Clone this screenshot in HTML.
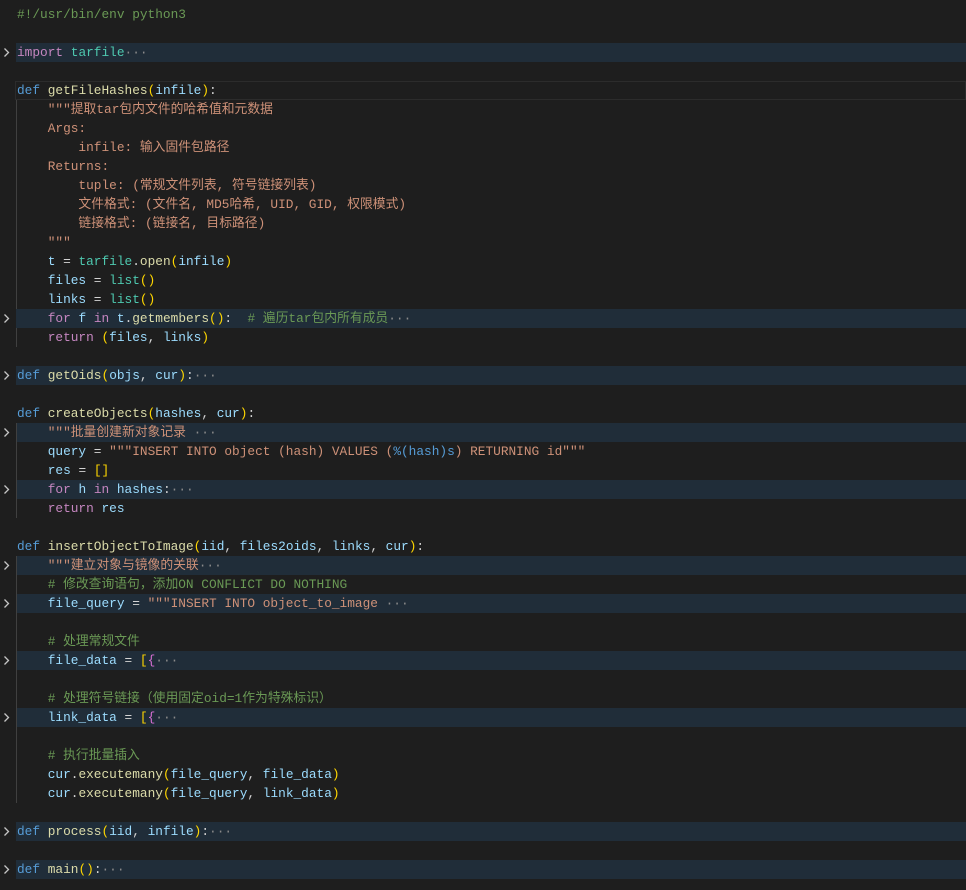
<!DOCTYPE html>
<html><head><meta charset="utf-8"><style>
html,body{margin:0;padding:0;background:#1e1e1e;width:966px;height:890px;overflow:hidden}
#ed{position:relative;width:966px;height:890px;font-family:"Liberation Mono","Noto Sans CJK SC",monospace;font-size:12.8px;color:#d4d4d4}
.l{position:absolute;left:0;width:966px;height:19px;line-height:19px;white-space:pre}
.t{position:absolute;left:17px;top:0}
.f{position:absolute;left:16px;right:0;top:0;height:19px;background:#202d39}
.cur{position:absolute;left:15px;right:0;top:0;height:17px;border:1px solid #2c2c2c}
.ch{position:absolute;left:2px;top:5px;width:9px;height:9px}
.g{position:absolute;left:16px;width:1px;background:#404040}
.k{color:#569cd6}.fn{color:#dcdcaa}.p{color:#9cdcfe}.s{color:#ce9178}.c{color:#6a9955}.kw{color:#c586c0}.m{color:#4ec9b0}
.y{color:#ffd700}.pk{color:#da70d6}.e{color:#8b8b8b}
</style></head><body><div id="ed">
<div class="g" style="top:100px;height:247px"></div>
<div class="g" style="top:423px;height:95px"></div>
<div class="g" style="top:556px;height:247px"></div>
<div class="l" style="top:5px"><span class="t c">#!/usr/bin/env python3</span></div>
<div class="l" style="top:43px"><div class="f"></div><svg class="ch" viewBox="0 0 9 9"><path d="M2.5 0.5 L6.5 4.5 L2.5 8.5" fill="none" stroke="#c5c5c5" stroke-width="1.3"/></svg><span class="t"><span class="kw">import</span> <span class="m">tarfile</span><span class="e">···</span></span></div>
<div class="l" style="top:81px"><div class="cur"></div><span class="t"><span class="k">def</span> <span class="fn">getFileHashes</span><span class="y">(</span><span class="p">infile</span><span class="y">)</span>:</span></div>
<div class="l" style="top:100px"><span class="t s">    """提取tar包内文件的哈希值和元数据</span></div>
<div class="l" style="top:119px"><span class="t s">    Args:</span></div>
<div class="l" style="top:138px"><span class="t s">        infile: 输入固件包路径</span></div>
<div class="l" style="top:157px"><span class="t s">    Returns:</span></div>
<div class="l" style="top:176px"><span class="t s">        tuple: (常规文件列表, 符号链接列表)</span></div>
<div class="l" style="top:195px"><span class="t s">        文件格式: (文件名, MD5哈希, UID, GID, 权限模式)</span></div>
<div class="l" style="top:214px"><span class="t s">        链接格式: (链接名, 目标路径)</span></div>
<div class="l" style="top:233px"><span class="t s">    """</span></div>
<div class="l" style="top:252px"><span class="t">    <span class="p">t</span> = <span class="m">tarfile</span>.<span class="fn">open</span><span class="y">(</span><span class="p">infile</span><span class="y">)</span></span></div>
<div class="l" style="top:271px"><span class="t">    <span class="p">files</span> = <span class="m">list</span><span class="y">()</span></span></div>
<div class="l" style="top:290px"><span class="t">    <span class="p">links</span> = <span class="m">list</span><span class="y">()</span></span></div>
<div class="l" style="top:309px"><div class="f"></div><svg class="ch" viewBox="0 0 9 9"><path d="M2.5 0.5 L6.5 4.5 L2.5 8.5" fill="none" stroke="#c5c5c5" stroke-width="1.3"/></svg><span class="t">    <span class="kw">for</span> <span class="p">f</span> <span class="kw">in</span> <span class="p">t</span>.<span class="fn">getmembers</span><span class="y">()</span>:  <span class="c"># 遍历tar包内所有成员</span><span class="e">···</span></span></div>
<div class="l" style="top:328px"><span class="t">    <span class="kw">return</span> <span class="y">(</span><span class="p">files</span>, <span class="p">links</span><span class="y">)</span></span></div>
<div class="l" style="top:366px"><div class="f"></div><svg class="ch" viewBox="0 0 9 9"><path d="M2.5 0.5 L6.5 4.5 L2.5 8.5" fill="none" stroke="#c5c5c5" stroke-width="1.3"/></svg><span class="t"><span class="k">def</span> <span class="fn">getOids</span><span class="y">(</span><span class="p">objs</span>, <span class="p">cur</span><span class="y">)</span>:<span class="e">···</span></span></div>
<div class="l" style="top:404px"><span class="t"><span class="k">def</span> <span class="fn">createObjects</span><span class="y">(</span><span class="p">hashes</span>, <span class="p">cur</span><span class="y">)</span>:</span></div>
<div class="l" style="top:423px"><div class="f" style="left:17px"></div><svg class="ch" viewBox="0 0 9 9"><path d="M2.5 0.5 L6.5 4.5 L2.5 8.5" fill="none" stroke="#c5c5c5" stroke-width="1.3"/></svg><span class="t">    <span class="s">"""批量创建新对象记录</span> <span class="e">···</span></span></div>
<div class="l" style="top:442px"><span class="t">    <span class="p">query</span> = <span class="s">"""INSERT INTO object (hash) VALUES (</span><span class="k">%(hash)s</span><span class="s">) RETURNING id"""</span></span></div>
<div class="l" style="top:461px"><span class="t">    <span class="p">res</span> = <span class="y">[]</span></span></div>
<div class="l" style="top:480px"><div class="f" style="left:17px"></div><svg class="ch" viewBox="0 0 9 9"><path d="M2.5 0.5 L6.5 4.5 L2.5 8.5" fill="none" stroke="#c5c5c5" stroke-width="1.3"/></svg><span class="t">    <span class="kw">for</span> <span class="p">h</span> <span class="kw">in</span> <span class="p">hashes</span>:<span class="e">···</span></span></div>
<div class="l" style="top:499px"><span class="t">    <span class="kw">return</span> <span class="p">res</span></span></div>
<div class="l" style="top:537px"><span class="t"><span class="k">def</span> <span class="fn">insertObjectToImage</span><span class="y">(</span><span class="p">iid</span>, <span class="p">files2oids</span>, <span class="p">links</span>, <span class="p">cur</span><span class="y">)</span>:</span></div>
<div class="l" style="top:556px"><div class="f" style="left:17px"></div><svg class="ch" viewBox="0 0 9 9"><path d="M2.5 0.5 L6.5 4.5 L2.5 8.5" fill="none" stroke="#c5c5c5" stroke-width="1.3"/></svg><span class="t">    <span class="s">"""建立对象与镜像的关联</span><span class="e">···</span></span></div>
<div class="l" style="top:575px"><span class="t">    <span class="c"># 修改查询语句，添加ON CONFLICT DO NOTHING</span></span></div>
<div class="l" style="top:594px"><div class="f" style="left:17px"></div><svg class="ch" viewBox="0 0 9 9"><path d="M2.5 0.5 L6.5 4.5 L2.5 8.5" fill="none" stroke="#c5c5c5" stroke-width="1.3"/></svg><span class="t">    <span class="p">file_query</span> = <span class="s">"""INSERT INTO object_to_image </span><span class="e">···</span></span></div>
<div class="l" style="top:632px"><span class="t">    <span class="c"># 处理常规文件</span></span></div>
<div class="l" style="top:651px"><div class="f" style="left:17px"></div><svg class="ch" viewBox="0 0 9 9"><path d="M2.5 0.5 L6.5 4.5 L2.5 8.5" fill="none" stroke="#c5c5c5" stroke-width="1.3"/></svg><span class="t">    <span class="p">file_data</span> = <span class="y">[</span><span class="pk">{</span><span class="e">···</span></span></div>
<div class="l" style="top:689px"><span class="t">    <span class="c"># 处理符号链接（使用固定oid=1作为特殊标识）</span></span></div>
<div class="l" style="top:708px"><div class="f" style="left:17px"></div><svg class="ch" viewBox="0 0 9 9"><path d="M2.5 0.5 L6.5 4.5 L2.5 8.5" fill="none" stroke="#c5c5c5" stroke-width="1.3"/></svg><span class="t">    <span class="p">link_data</span> = <span class="y">[</span><span class="pk">{</span><span class="e">···</span></span></div>
<div class="l" style="top:746px"><span class="t">    <span class="c"># 执行批量插入</span></span></div>
<div class="l" style="top:765px"><span class="t">    <span class="p">cur</span>.<span class="fn">executemany</span><span class="y">(</span><span class="p">file_query</span>, <span class="p">file_data</span><span class="y">)</span></span></div>
<div class="l" style="top:784px"><span class="t">    <span class="p">cur</span>.<span class="fn">executemany</span><span class="y">(</span><span class="p">file_query</span>, <span class="p">link_data</span><span class="y">)</span></span></div>
<div class="l" style="top:822px"><div class="f"></div><svg class="ch" viewBox="0 0 9 9"><path d="M2.5 0.5 L6.5 4.5 L2.5 8.5" fill="none" stroke="#c5c5c5" stroke-width="1.3"/></svg><span class="t"><span class="k">def</span> <span class="fn">process</span><span class="y">(</span><span class="p">iid</span>, <span class="p">infile</span><span class="y">)</span>:<span class="e">···</span></span></div>
<div class="l" style="top:860px"><div class="f"></div><svg class="ch" viewBox="0 0 9 9"><path d="M2.5 0.5 L6.5 4.5 L2.5 8.5" fill="none" stroke="#c5c5c5" stroke-width="1.3"/></svg><span class="t"><span class="k">def</span> <span class="fn">main</span><span class="y">()</span>:<span class="e">···</span></span></div>
</div></body></html>
